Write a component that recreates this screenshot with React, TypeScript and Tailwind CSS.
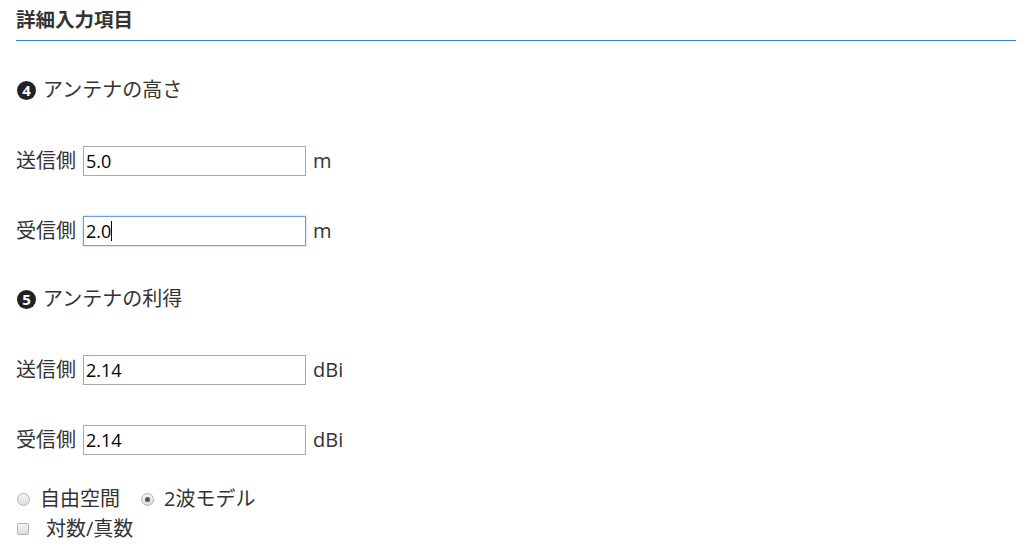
const font = { fontFamily: '"Open Sans", "Noto Sans CJK JP", sans-serif' };

function Field({ label, value, unit, focused }: { label: string; value: string; unit: string; focused?: boolean }) {
  return (
    <div className="flex items-center h-[30px]">
      <span className="w-[67px] text-[20px] text-[#333]">{label}</span>
      <div
        className={
          focused
            ? 'w-[223px] h-[30px] border border-[#6b9ee8] shadow-[0_0_2px_#9ec0f0] flex items-center pl-[2px]'
            : 'w-[223px] h-[30px] border border-[#a9a9a9] flex items-center pl-[2px]'
        }
      >
        <span className="text-[18px] text-black leading-none">{value}</span>
        {focused && <span className="w-px h-[20px] bg-black" />}
      </div>
      <span className="ml-[7px] text-[20px] text-[#333]">{unit}</span>
    </div>
  );
}

function SectionTitle({ num, text }: { num: string; text: string }) {
  return (
    <div className="flex items-center h-[28px] text-[20px] text-[#333]">
      <span className="ml-px w-[19px] h-[19px] rounded-full bg-[#222] text-white text-[15px] font-bold flex items-center justify-center mr-[7px]">
        {num}
      </span>
      <span>{text}</span>
    </div>
  );
}

export default function App() {
  return (
    <div className="bg-white w-[1032px] h-[554px] px-4" style={font}>
      <h2 className="pt-[8px] pb-[8px] leading-[24px] text-[19.5px] font-bold text-[#333] border-b border-[#3a7fc1]">
        詳細入力項目
      </h2>
      <div className="mt-[35px]">
        <SectionTitle num="4" text="アンテナの高さ" />
      </div>
      <div className="mt-[42px]">
        <Field label="送信側" value="5.0" unit="m" />
      </div>
      <div className="mt-[40px]">
        <Field label="受信側" value="2.0" unit="m" focused />
      </div>
      <div className="mt-[39px]">
        <SectionTitle num="5" text="アンテナの利得" />
      </div>
      <div className="mt-[42px]">
        <Field label="送信側" value="2.14" unit="dBi" />
      </div>
      <div className="mt-[40px]">
        <Field label="受信側" value="2.14" unit="dBi" />
      </div>
      <div className="mt-[33px] flex items-center h-[22px] text-[20px] text-[#333]">
        <span className="ml-px w-[13px] h-[13px] rounded-full border border-[#b4b4b4] bg-gradient-to-b from-[#f4f4f4] to-[#dcdcdc]" />
        <span className="ml-[10px]">自由空間</span>
        <span className="ml-[21px] w-[13px] h-[13px] rounded-full border border-[#b4b4b4] bg-gradient-to-b from-[#f4f4f4] to-[#dcdcdc] flex items-center justify-center">
          <span className="w-[5px] h-[5px] rounded-full bg-[#555]" />
        </span>
        <span className="ml-[10px]">2波モデル</span>
      </div>
      <div className="mt-[8px] flex items-center h-[22px] text-[20px] text-[#333]">
        <span className="ml-px w-[12px] h-[12px] rounded-[2px] border border-[#b4b4b4] bg-gradient-to-b from-[#f4f4f4] to-[#dcdcdc]" />
        <span className="ml-[17px]">対数/真数</span>
      </div>
    </div>
  );
}
